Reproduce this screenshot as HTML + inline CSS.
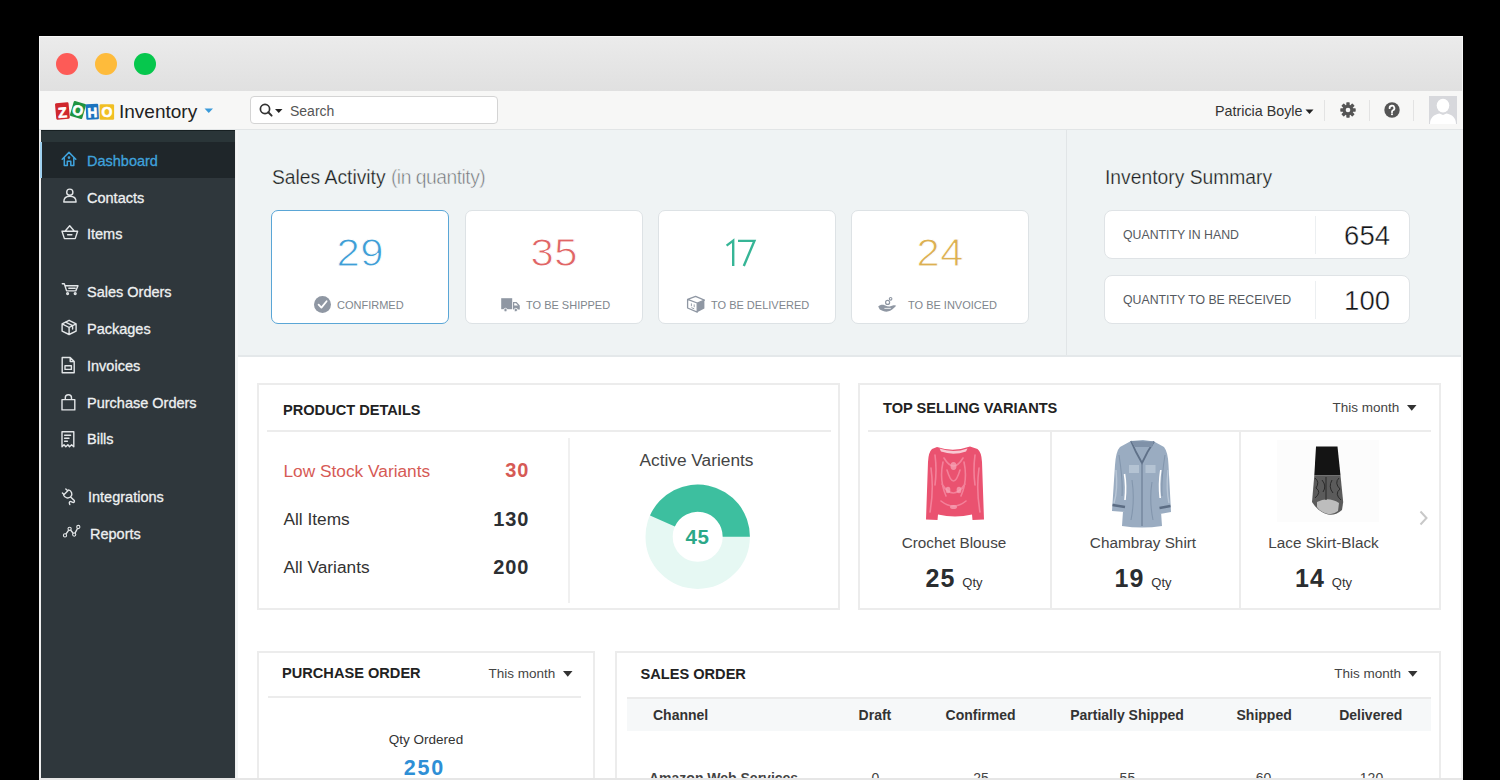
<!DOCTYPE html>
<html><head><meta charset="utf-8"><style>
*{margin:0;padding:0;box-sizing:border-box}
html,body{width:1500px;height:780px;overflow:hidden;background:#000;font-family:"Liberation Sans",sans-serif;color:#333}
.a{position:absolute;white-space:nowrap}
.dot{position:absolute;width:22px;height:22px;border-radius:50%}
.nav{position:absolute;left:41px;width:194px;height:37px;color:#eef0f1;font-size:14.5px}
.nav span{position:absolute;left:46px;top:10px}
.nav svg{position:absolute;left:20px;top:10px}
.card{position:absolute;top:210px;width:178px;height:114px;background:#fff;border:1px solid #dde2e5;border-radius:7px}
.card .num{position:absolute;left:0;right:0;top:22px;text-align:center;font-size:38px;line-height:40px;letter-spacing:0.5px;text-indent:0.5px;transform:scaleX(1.1);-webkit-text-stroke:0.9px #fff}
.card .lbl{position:absolute;left:0;right:0;top:88px;text-align:center;font-size:11px;color:#7b8087;white-space:nowrap}
.nv{left:87px;font-size:14.5px;line-height:16px;color:#eef0f1;-webkit-text-stroke:0.3px currentColor}
.lb{top:299px;font-size:11px;line-height:12px;color:#80868d}
.ibox{position:absolute;left:1104px;width:306px;height:49px;background:#fff;border:1px solid #dfe3e6;border-radius:8px}
.ibox:after{content:"";position:absolute;left:210px;top:5px;width:1px;height:38px;background:#eceff1}
.il{position:absolute;left:18px;top:17px;font-size:12.3px;line-height:14px;color:#55595e}
.iv{position:absolute;right:19px;top:10px;font-size:27.5px;line-height:30px;color:#111316;-webkit-text-stroke:0.4px #fff}
.box{position:absolute;background:#fff;border:2px solid #e8e8e8}
</style></head><body>
<!-- window frame -->
<div class="a" style="left:39px;top:36px;width:1424px;height:744px;background:#eeeeee"></div>
<!-- title bar -->
<div class="a" style="left:39px;top:36px;width:1424px;height:55px;background:linear-gradient(#ebebeb,#e0e0e0);border-top:1px solid #f8f8f8;border-left:1px solid #f6f6f6;border-right:1px solid #f6f6f6"></div>
<div class="dot" style="left:56px;top:53px;background:#fd5b57"></div>
<div class="dot" style="left:95px;top:53px;background:#febb3b"></div>
<div class="dot" style="left:134px;top:53px;background:#06c74d"></div>
<!-- header -->
<div class="a" style="left:39px;top:91px;width:1424px;height:39px;background:#f7f7f6;border-bottom:1px solid #e2e5e6"></div>
<!-- zoho logo -->
<svg class="a" style="left:0;top:0" width="130" height="130" font-family="Liberation Sans" font-weight="700" text-anchor="middle" stroke-width="0.6">
  <g transform="rotate(-5 62.3 111)"><rect x="55.6" y="102.8" width="13.6" height="16.4" rx="1.2" fill="#d0272d"/><text x="62.3" y="117.6" font-size="14.5" fill="#fff" stroke="#fff">Z</text></g>
  <g transform="rotate(16 78 110)"><rect x="71.6" y="102.2" width="12.8" height="15.6" rx="1.2" fill="#1f9441"/><text x="78" y="115.2" font-size="14" fill="#fff" stroke="#fff">O</text></g>
  <g transform="rotate(-3 92.3 111.8)"><rect x="86" y="104" width="12.6" height="15.6" rx="1.2" fill="#1c74bf"/><text x="92.3" y="117.3" font-size="13.5" fill="#fff" stroke="#fff">H</text></g>
  <rect x="99.6" y="104.2" width="14.5" height="15.6" rx="1.2" fill="#f1bf23"/><text x="106.9" y="117.4" font-size="14" fill="#fff" stroke="#fff">O</text>
</svg>
<div class="a" style="left:119px;top:101px;font-size:19px;line-height:22px;color:#222">Inventory</div>
<svg class="a" style="left:204px;top:108px" width="10" height="6"><path d="M0.5 0.5h8.5l-4.25 4.5z" fill="#3a9ad9"/></svg>
<!-- search -->
<div class="a" style="left:250px;top:96px;width:248px;height:28px;background:#fff;border:1.5px solid #d4d4d4;border-radius:4px"></div>
<svg class="a" style="left:258px;top:102px" width="28" height="16"><circle cx="7" cy="7" r="4.6" fill="none" stroke="#333" stroke-width="1.7"/><path d="M10.3 10.3l3.3 3.3" stroke="#333" stroke-width="2" stroke-linecap="round"/><path d="M17 7h7.5l-3.75 4z" fill="#222"/></svg>
<div class="a" style="left:290px;top:103px;font-size:14px;line-height:16px;color:#555">Search</div>
<!-- user -->
<div class="a" style="left:1215px;top:103px;font-size:14.3px;line-height:16px;color:#333">Patricia Boyle</div>
<svg class="a" style="left:1305px;top:109px" width="9" height="6"><path d="M0.5 0.5h8l-4 4.5z" fill="#222"/></svg>
<div class="a" style="left:1324px;top:100px;width:1px;height:21px;background:#e3e3e3"></div>
<div class="a" style="left:1369px;top:100px;width:1px;height:21px;background:#e3e3e3"></div>
<div class="a" style="left:1413px;top:100px;width:1px;height:21px;background:#e3e3e3"></div>
<svg class="a" style="left:1340px;top:101.8px" width="16" height="16" viewBox="0 0 16 16"><g fill="#555"><circle cx="8" cy="8" r="5.3"/><g id="tooth"><rect x="6.3" y="0.3" width="3.4" height="4" rx="0.6"/></g><use href="#tooth" transform="rotate(45 8 8)"/><use href="#tooth" transform="rotate(90 8 8)"/><use href="#tooth" transform="rotate(135 8 8)"/><use href="#tooth" transform="rotate(180 8 8)"/><use href="#tooth" transform="rotate(225 8 8)"/><use href="#tooth" transform="rotate(270 8 8)"/><use href="#tooth" transform="rotate(315 8 8)"/></g><circle cx="8" cy="8" r="2.3" fill="#f7f7f7"/></svg>
<svg class="a" style="left:1383.5px;top:101.8px" width="16" height="16" viewBox="0 0 16 16"><circle cx="8" cy="8" r="7.7" fill="#555"/><path d="M5.6 6.2a2.4 2.4 0 1 1 3.4 2.1c-.7.4-1 .7-1 1.5v.4" fill="none" stroke="#fff" stroke-width="1.8" stroke-linecap="round"/><circle cx="8" cy="12.2" r="1.05" fill="#fff"/></svg>
<div class="a" style="left:1429px;top:96px;width:28px;height:28px;background:#d7d8dc;overflow:hidden"><svg width="28" height="28"><ellipse cx="14" cy="9.6" rx="6.3" ry="6.8" fill="#fff"/><path d="M1 28c0-6.5 4-9.6 9.5-10.6L14 19l3.5-1.6C23 18.4 27 21.5 27 28z" fill="#fff"/></svg></div>
<!-- sidebar -->
<div class="a" style="left:41px;top:130px;width:194px;height:648px;background:#2f373c"></div>
<div class="a" style="left:41px;top:130px;width:194px;height:12px;background:#2a3538;border-top:1px solid #172022"></div>
<div class="a" style="left:41px;top:142px;width:194px;height:36px;background:#1f262a"></div>
<div class="a" style="left:40px;top:142px;width:2px;height:36px;background:#9fd0ef"></div>
<svg class="a" style="left:0;top:0" width="240" height="560">
 <g fill="none" stroke="#3fa2dc" stroke-width="1.5" stroke-linejoin="round" stroke-linecap="round">
  <path d="M62.2 159.2 L69 152.4 L75.8 159.2 M64.3 157.6 V165.6 H67.3 V161.3 H70.8 V165.6 H73.8 V157.6"/>
  <circle cx="69" cy="157.6" r="0.6" fill="#3fa2dc"/>
 </g>
 <g fill="none" stroke="#e3e6e8" stroke-width="1.4" stroke-linejoin="round" stroke-linecap="round">
  <circle cx="69.8" cy="192.2" r="3.1"/>
  <path d="M63.8 202 C63.8 197.8 66.5 196.3 69.8 196.3 C73.1 196.3 76.1 197.8 76.1 202 Z"/>
  <path d="M65.2 231 L69.7 225.7 L74.2 231 M62 231.2 H77.6 L75.2 238.6 H64.4 Z M67.6 234.8 H71.9"/>
  <path d="M62.3 283.7 H64.3 L66.6 290.9 H75.8 L78 285.8 H65.6 M68.8 288.3 H75.2"/>
  <circle cx="67.6" cy="293.6" r="0.9"/><circle cx="75.2" cy="293.6" r="0.9"/>
  <path d="M69.1 320.3 L76.1 323.9 V331.1 L69.1 334.5 L62.1 331.1 V323.9 Z M62.1 323.9 L69.1 327.5 L76.1 323.9 M69.1 327.5 V334.5 M65.6 322.1 L72.6 325.7 V329"/>
  <path d="M62.2 357.5 H70.2 L74.2 361.5 V372.8 H62.2 Z M70.2 357.5 V361.5 H74.2 M65 365.8 H71.4 V369.4 H65 Z"/>
  <path d="M62 399.6 H74.8 V409.9 H62 Z M65.3 399.6 V397.8 C65.3 395.6 66.8 394.8 68.4 394.8 C70 394.8 71.5 395.6 71.5 397.8 V399.6"/>
  <path d="M62 431.8 H73.8 V446.8 L71.6 444.8 L69.5 446.8 L67.9 444.8 L65.8 446.8 L64 444.8 L62 446.8 Z M64.6 435.3 H70.6 M64.6 438.3 H69 M64.6 441.2 H67.4"/>
  <path d="M65.8 488.9 L67.2 490.2 M62.4 492.9 L63.8 494.2 M63.6 494.9 L68.6 489.9 M63.6 494.9 C64.4 498.2 68.8 499 71 496.4 C72.8 494.2 71.6 490.8 68.6 489.9 M70.6 497 L74.3 500.6 C74.8 501.6 74 502.8 72.8 502.4 L71 501.6 C69.8 501.2 69 502.2 69.4 503.4 L69.8 504.6"/>
  <path d="M65 535.4 L69.6 528.8 L74.2 534.6 L78.3 527"/>
  <circle cx="65" cy="535.4" r="1.6" fill="#2f373c" stroke-width="1.1"/><circle cx="69.6" cy="528.8" r="1.6" fill="#2f373c" stroke-width="1.1"/><circle cx="74.2" cy="534.6" r="1.6" fill="#2f373c" stroke-width="1.1"/><circle cx="78.3" cy="527" r="1.6" fill="#2f373c" stroke-width="1.1"/>
 </g>
</svg>
<div class="a nv" style="top:153px;color:#3fa2dc">Dashboard</div>
<div class="a nv" style="top:189.5px">Contacts</div>
<div class="a nv" style="top:226.3px">Items</div>
<div class="a nv" style="top:284.2px">Sales Orders</div>
<div class="a nv" style="top:321px">Packages</div>
<div class="a nv" style="top:357.8px">Invoices</div>
<div class="a nv" style="top:394.6px">Purchase Orders</div>
<div class="a nv" style="top:431.4px">Bills</div>
<div class="a nv" style="top:489.2px;left:88px">Integrations</div>
<div class="a nv" style="top:526px;left:90px">Reports</div>
<!-- main -->
<div class="a" style="left:236px;top:130px;width:1226px;height:648px;background:#fff"></div>
<div class="a" style="left:236px;top:130px;width:1226px;height:227px;background:#eff3f4;border-bottom:2px solid #e4e8ea"></div>
<div class="a" style="left:1066px;top:130px;width:1px;height:225px;background:#e1e5e7"></div>
<div class="a" style="left:236px;top:130px;width:2px;height:648px;background:#f3f5f6"></div>
<div class="a" style="left:272px;top:167px;font-size:19.3px;line-height:22px;color:#1c1f22;-webkit-text-stroke:0.25px #eff3f4">Sales Activity <span style="color:#6f7377;letter-spacing:-0.5px;-webkit-text-stroke:0.5px #eff3f4">(in quantity)</span></div>
<div class="a" style="left:1105px;top:167px;font-size:19.3px;line-height:22px;color:#1c1f22;-webkit-text-stroke:0.25px #eff3f4">Inventory Summary</div>
<div class="card" style="left:271px;border-color:#5aa6d6"><div class="num" style="color:#3f9ed6">29</div></div>
<div class="card" style="left:465px;"><div class="num" style="color:#e06565">35</div></div>
<div class="card" style="left:658px;"></div>
<div class="card" style="left:851px;"><div class="num" style="color:#dcb052">24</div></div>
<svg class="a" style="left:0;top:0" width="800" height="300"><g fill="none" stroke="#36b596" stroke-width="2.4" stroke-linejoin="miter"><path d="M726.6 245.6 L733.2 240.6 V266"/><path d="M738 240.9 H754.4 L743.8 266"/></g></svg>
<div class="a lb" style="left:337px">CONFIRMED</div>
<div class="a lb" style="left:526px">TO BE SHIPPED</div>
<div class="a lb" style="left:711px">TO BE DELIVERED</div>
<div class="a lb" style="left:908px">TO BE INVOICED</div>
<svg class="a" style="left:0;top:0" width="1100" height="330">
 <circle cx="322.5" cy="304.4" r="8.5" fill="#8f97a3"/>
 <path d="M318.6 304.6 L321.4 307.6 L326.6 301.2" fill="none" stroke="#fff" stroke-width="1.8" stroke-linecap="round" stroke-linejoin="round"/>
 <path d="M501.2 298.2 H512.2 V309.2 H501.2 Z" fill="#8f97a3"/>
 <path d="M513 302 H516.6 L519.8 305.6 V309.4 H513 Z" fill="#8f97a3"/>
 <path d="M514.2 303.3 H516 L518 305.6 H514.2 Z" fill="#fff"/>
 <circle cx="505.5" cy="310" r="1.7" fill="#8f97a3" stroke="#fff" stroke-width="0.8"/><circle cx="515.8" cy="310" r="1.7" fill="#8f97a3" stroke="#fff" stroke-width="0.8"/>
 <path d="M697.2 303 L704.4 300.2 V308.6 L697.2 312.2 Z" fill="#8f97a3"/>
 <path d="M687.6 299.4 L695.6 296.4 L704.4 300.2 L697.2 303 Z M687.6 299.4 V308 L697.2 312.2 V303" fill="none" stroke="#8f97a3" stroke-width="1.3" stroke-linejoin="round"/>
 <path d="M691.4 303.4 V306.2 M694.2 304.4 V307.2 M691.4 307.6 L694.2 308.8" stroke="#8f97a3" stroke-width="0.9"/>
 <path d="M878.2 306.6 C880 304.6 882.6 304.4 884.6 305.2 C886.4 306 888 306.4 889.6 306.6 L892.8 305.4 C894.4 305 895.8 305.2 896.2 305.8 C894 308.2 891.4 310.8 887.6 311.6 C885 312 882 310.6 879.8 309.4 Z" fill="#8f97a3"/>
 <path d="M884.4 308.4 H890.8" stroke="#fff" stroke-width="0.8"/>
 <circle cx="887.6" cy="302.4" r="2" fill="none" stroke="#8f97a3" stroke-width="1.2"/>
 <circle cx="890.6" cy="298.8" r="1.3" fill="none" stroke="#8f97a3" stroke-width="1.1"/>
</svg>
<div class="ibox" style="top:210px"><span class="il">QUANTITY IN HAND</span><span class="iv">654</span></div>
<div class="ibox" style="top:275px"><span class="il">QUANTITY TO BE RECEIVED</span><span class="iv">100</span></div>
<!-- content -->
<div class="a" style="left:257px;top:383px;width:583px;height:227px;background:#fff;border:2px solid #ececec;"></div>
<div class="a" style="left:283px;top:400.74px;font-size:14.6px;line-height:18px;font-weight:700;color:#222;">PRODUCT DETAILS</div>
<div class="a" style="left:267px;top:429.5px;width:564px;height:2.0px;background:#ececec;"></div>
<div class="a" style="left:568px;top:438px;width:2px;height:165px;background:#f0f0f0;"></div>
<div class="a" style="left:283.5px;top:460.91px;font-size:17.3px;line-height:21px;font-weight:400;color:#d65a55;">Low Stock Variants</div>
<div class="a" style="left:283.5px;top:509.01px;font-size:17.3px;line-height:21px;font-weight:400;color:#333;">All Items</div>
<div class="a" style="left:283.5px;top:557.11px;font-size:17.3px;line-height:21px;font-weight:400;color:#333;">All Variants</div>
<div class="a" style="right:970.5px;top:458.47px;font-size:20px;line-height:24px;font-weight:700;color:#d65a55;letter-spacing:1px">30</div>
<div class="a" style="right:970.5px;top:506.57px;font-size:20px;line-height:24px;font-weight:700;color:#2c2f33;letter-spacing:1px">130</div>
<div class="a" style="right:970.5px;top:554.67px;font-size:20px;line-height:24px;font-weight:700;color:#2c2f33;letter-spacing:1px">200</div>
<div class="a" style="left:496.5px;width:400px;text-align:center;top:450.01px;font-size:17.3px;line-height:21px;font-weight:400;color:#444;">Active Varients</div>
<svg class="a" style="left:0;top:0" width="1500" height="780">
<circle cx="697.7" cy="536.7" r="38.6" fill="none" stroke="#e6f8f3" stroke-width="27.200000000000003"/>
<path d="M749.9000000000001 536.7 A52.2 52.2 0 0 0 650.01 515.47 L674.86 526.53 A25 25 0 0 1 722.7 536.7 Z" fill="#3dbf9f"/>
</svg>
<div class="a" style="left:497.5px;width:400px;text-align:center;top:523.90px;font-size:20.5px;line-height:25px;font-weight:700;color:#2ba888;letter-spacing:0.5px">45</div>
<div class="a" style="left:858px;top:383px;width:583px;height:227px;background:#fff;border:2px solid #ececec;"></div>
<div class="a" style="left:883px;top:399.24px;font-size:14.6px;line-height:18px;font-weight:700;color:#222;">TOP SELLING VARIANTS</div>
<div class="a" style="left:1332.5px;top:399.92px;font-size:13.5px;line-height:16px;font-weight:400;color:#444;">This month</div>
<svg class="a" style="left:1406.5px;top:404.8px" width="10.5" height="6.8"><path d="M0 0H9.5L4.75 5.8Z" fill="#333"/></svg>
<div class="a" style="left:868px;top:429.5px;width:563px;height:2.0px;background:#ececec;"></div>
<div class="a" style="left:1050px;top:431px;width:2px;height:177px;background:#ececec;"></div>
<div class="a" style="left:1238.5px;top:431px;width:2.0px;height:177px;background:#ececec;"></div>
<div class="a" style="left:754px;width:400px;text-align:center;top:533.60px;font-size:15.3px;line-height:18px;font-weight:400;color:#444;">Crochet Blouse</div>
<div class="a" style="left:943px;width:400px;text-align:center;top:533.60px;font-size:15.3px;line-height:18px;font-weight:400;color:#444;">Chambray Shirt</div>
<div class="a" style="left:1123.5px;width:400px;text-align:center;top:533.60px;font-size:15.3px;line-height:18px;font-weight:400;color:#444;">Lace Skirt-Black</div>
<div class="a" style="left:754px;width:400px;text-align:center;top:563.34px;font-size:25px;line-height:30px;font-weight:400;color:#333;"><span style="font-size:25px;font-weight:700;letter-spacing:1px;color:#2a2d30">25</span> <span style="font-size:13px;color:#333">Qty</span></div>
<div class="a" style="left:943px;width:400px;text-align:center;top:563.34px;font-size:25px;line-height:30px;font-weight:400;color:#333;"><span style="font-size:25px;font-weight:700;letter-spacing:1px;color:#2a2d30">19</span> <span style="font-size:13px;color:#333">Qty</span></div>
<div class="a" style="left:1123.5px;width:400px;text-align:center;top:563.34px;font-size:25px;line-height:30px;font-weight:400;color:#333;"><span style="font-size:25px;font-weight:700;letter-spacing:1px;color:#2a2d30">14</span> <span style="font-size:13px;color:#333">Qty</span></div>
<svg class="a" style="left:1418px;top:510px" width="12" height="16"><path d="M2.5 1.5L8.5 8L2.5 14.5" fill="none" stroke="#c8c8c8" stroke-width="2"/></svg>
<div class="a" style="left:257px;top:651px;width:338px;height:149px;background:#fff;border:2px solid #ececec;"></div>
<div class="a" style="left:282px;top:664.34px;font-size:14.6px;line-height:18px;font-weight:700;color:#222;">PURCHASE ORDER</div>
<div class="a" style="left:488.5px;top:665.72px;font-size:13.5px;line-height:16px;font-weight:400;color:#444;">This month</div>
<svg class="a" style="left:563px;top:670.8px" width="10.5" height="6.8"><path d="M0 0H9.5L4.75 5.8Z" fill="#333"/></svg>
<div class="a" style="left:268px;top:696px;width:313px;height:2px;background:#ececec;"></div>
<div class="a" style="left:226px;width:400px;text-align:center;top:731.52px;font-size:13.5px;line-height:16px;font-weight:400;color:#333;">Qty Ordered</div>
<div class="a" style="left:224.5px;width:400px;text-align:center;top:755.15px;font-size:21.5px;line-height:26px;font-weight:700;color:#2e8fd6;letter-spacing:1.8px">250</div>
<div class="a" style="left:615px;top:651px;width:826px;height:149px;background:#fff;border:2px solid #ececec;"></div>
<div class="a" style="left:640.5px;top:664.94px;font-size:14.6px;line-height:18px;font-weight:700;color:#222;">SALES ORDER</div>
<div class="a" style="left:1334.2px;top:665.92px;font-size:13.5px;line-height:16px;font-weight:400;color:#444;">This month</div>
<svg class="a" style="left:1408px;top:670.8px" width="10.5" height="6.8"><path d="M0 0H9.5L4.75 5.8Z" fill="#333"/></svg>
<div class="a" style="left:627px;top:697px;width:804px;height:34px;background:#f6f8f9;border-top:2px solid #ebebeb"></div>
<div class="a" style="left:653px;top:707.05px;font-size:14px;line-height:17px;font-weight:700;color:#333;">Channel</div>
<div class="a" style="left:858.6px;top:707.05px;font-size:14px;line-height:17px;font-weight:700;color:#333;">Draft</div>
<div class="a" style="left:945.6px;top:707.05px;font-size:14px;line-height:17px;font-weight:700;color:#333;">Confirmed</div>
<div class="a" style="left:1070.2px;top:707.05px;font-size:14px;line-height:17px;font-weight:700;color:#333;">Partially Shipped</div>
<div class="a" style="left:1236.5px;top:707.05px;font-size:14px;line-height:17px;font-weight:700;color:#333;">Shipped</div>
<div class="a" style="left:1339.2px;top:707.05px;font-size:14px;line-height:17px;font-weight:700;color:#333;">Delivered</div>
<div class="a" style="left:649px;top:769.75px;font-size:14px;line-height:17px;font-weight:700;color:#444;">Amazon Web Services</div>
<div class="a" style="left:675.5px;width:400px;text-align:center;top:769.75px;font-size:14px;line-height:17px;font-weight:400;color:#444;">0</div>
<div class="a" style="left:781px;width:400px;text-align:center;top:769.75px;font-size:14px;line-height:17px;font-weight:400;color:#444;">25</div>
<div class="a" style="left:927.4000000000001px;width:400px;text-align:center;top:769.75px;font-size:14px;line-height:17px;font-weight:400;color:#444;">55</div>
<div class="a" style="left:1063.5px;width:400px;text-align:center;top:769.75px;font-size:14px;line-height:17px;font-weight:400;color:#444;">60</div>
<div class="a" style="left:1171.5px;width:400px;text-align:center;top:769.75px;font-size:14px;line-height:17px;font-weight:400;color:#444;">120</div>
<!-- images -->
<svg class="a" style="left:0;top:0" width="1500" height="780">
 <path d="M937 447 Q953.5 452.5 970 446.5 L977.5 449 Q981.5 452 982 462 L984 519.5 L972.5 520 L972 514.5 Q955 518.5 938 514.5 L937.5 520 L926 519.5 L928 462 Q928.5 452 932 449 Z" fill="#ea5270"/>
 <path d="M939.5 448.6 Q953.5 453.6 967.5 448.4 L966 451.4 Q953.5 456 941 451.6 Z" fill="#f8c9d3"/>
 <g fill="none" stroke="#f48aa1" stroke-width="1.6" opacity="0.85" stroke-linecap="round">
  <path d="M944 458 Q953.5 474 963 458 M947 470 Q953.5 492 960 470 M942 484 Q953 502 965 484 M941 501 Q953.5 511 966 501 M931 468 Q934 490 930 512 M979 468 Q976 490 980 512 M943 462 Q939 480 946 496 M964 462 Q968 480 961 496 M935 455 Q937 470 935 485 M975 455 Q973 470 975 485"/>
 </g>
 <g fill="#f7a9ba" opacity="0.7"><ellipse cx="953.5" cy="466" rx="3" ry="4"/><ellipse cx="948" cy="490" rx="2.4" ry="3.2"/><ellipse cx="959" cy="490" rx="2.4" ry="3.2"/><ellipse cx="953.5" cy="507" rx="3.5" ry="2"/></g>
 <g>
  <path d="M1131 441 L1143 440 L1154 441.5 L1164 447 Q1168 452 1168.5 465 L1171 512 L1160 514 L1160 497 L1162 526 Q1142 529 1122 526 L1124 497 L1125 512 L1112 511 L1115 465 Q1116 451 1120 447 Z" fill="#9aacc1"/>
  <path d="M1124.5 474 Q1126.5 486 1125 500" fill="none" stroke="#fff" stroke-width="1.6"/>
  <path d="M1160.8 470 Q1158.6 484 1160.2 498" fill="none" stroke="#fff" stroke-width="1.6"/>
  <path d="M1131 441 L1136 452 L1142 463 L1147.5 452 L1154 441.5" fill="none" stroke="#5f7189" stroke-width="1.8"/>
  <path d="M1131 441 L1135 447 L1152 447 L1154 441.5 Z" fill="#7f91a8"/>
  <path d="M1142 463 L1142 526" stroke="#6d7f96" stroke-width="1.2"/>
  <path d="M1112.5 505 L1125 507 M1159.5 508 L1170.5 506" stroke="#5c6d84" stroke-width="2.6"/>
  <path d="M1129 465 H1139 V473 H1129 Z M1145.5 465 H1155.5 V473 H1145.5 Z" fill="#b4c3d3"/>
  <path d="M1119 455 Q1123 480 1122 496 M1165 455 Q1161 480 1162 496 M1132 480 Q1135 500 1131 520 M1152 482 Q1149 500 1153 520" fill="none" stroke="#8396ad" stroke-width="1.1"/>
  <path d="M1116 470 Q1118 490 1114 503 M1168 470 Q1166 490 1169 503" fill="none" stroke="#b8c6d6" stroke-width="1.4"/>
 </g>
 <rect x="1277" y="440" width="102" height="82" fill="#fcfcfc"/>
 <path d="M1316 446.5 H1337.5 L1340.5 475.5 H1314.3 Z" fill="#141414"/>
 <path d="M1314.3 475.5 H1340.5 L1343.2 502 L1342 510 Q1335 516 1328 514.6 Q1318 512 1312 502 Z" fill="#5b5b5b"/>
 <path d="M1317 502 Q1328 496 1339 503 L1338 511 Q1333 515 1328 514 Q1320 512 1317 507 Z" fill="#bdbdbd"/>
 <g stroke="#2a2a2a" stroke-width="1" fill="none"><path d="M1315 478 Q1320 482 1316 488 Q1322 492 1315 498 M1339 478 Q1334 483 1340 489 Q1334 494 1341 500 M1322 480 Q1327 486 1323 492 M1332 480 Q1328 487 1333 493 M1326 477 V500"/></g>
</svg>
<!-- bottom edge -->
<div class="a" style="left:1461px;top:130px;width:2px;height:648px;background:#f1f1f1"></div>
<div class="a" style="left:39px;top:778px;width:1424px;height:2px;background:#e6e6e6"></div>
</body></html>
